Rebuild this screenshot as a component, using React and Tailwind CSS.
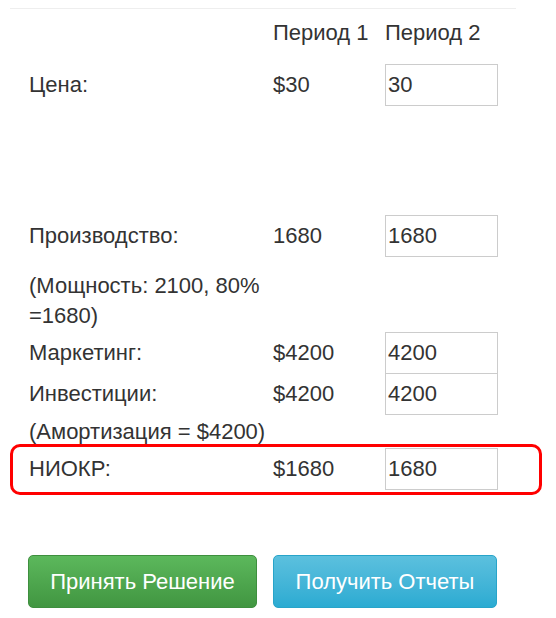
import React from "react";

const font = { fontFamily: '"Liberation Sans", Arial, sans-serif' };

function Field({ value, className = "" }) {
  return (
    <input
      defaultValue={value}
      className={`w-[113px] h-[42px] border border-[#ccc] bg-white pl-[2px] text-[22px] text-[#333] outline-none ${className}`}
      style={font}
    />
  );
}

function Row({ label, first, value, className = "" }) {
  return (
    <div className={`flex items-center h-[42px] ${className}`}>
      <div className="w-[244px]">{label}</div>
      <div className="w-[112px]">{first}</div>
      <Field value={value} />
    </div>
  );
}

export default function App() {
  return (
    <div className="w-[556px] h-[618px] bg-white text-[#333] text-[22px] leading-[30px] pt-[8px] overflow-hidden" style={font}>
      <div className="ml-[10px] w-[506px] border-t border-[#eee]" />

      <div className="pl-[29px]">
        <div className="flex items-center h-[28px] mt-[10px]">
          <div className="w-[244px]" />
          <div className="w-[112px]">Период 1</div>
          <div>Период 2</div>
        </div>

        <Row label="Цена:" first="$30" value="30" className="mt-[17px]" />
        <Row label="Производство:" first="1680" value="1680" className="mt-[109px]" />

        <div className="mt-[14px] w-[250px]">(Мощность: 2100, 80% =1680)</div>

        <Row label="Маркетинг:" first="$4200" value="4200" className="mt-[1px]" />
        <Row label="Инвестиции:" first="$4200" value="4200" className="-mt-px" />

        <div className="mt-[2px] h-[30px]">(Амортизация = $4200)</div>
      </div>

      <div className="ml-[10px] w-[532px] h-[51px] -mt-[3px] border-[3px] border-[#f00] rounded-[10px] pl-[16px] pt-[1px]">
        <Row label="НИОКР:" first="$1680" value="1680" />
      </div>

      <div className="flex gap-[16px] ml-[28px] mt-[60px]">
        <button className="w-[229px] h-[53px] rounded-[5px] border border-[#3e8f3e] bg-gradient-to-b from-[#5cb85c] to-[#419641] text-white text-[22px]" style={font}>
          Принять Решение
        </button>
        <button className="w-[224px] h-[53px] rounded-[5px] border border-[#28a4c9] bg-gradient-to-b from-[#5bc0de] to-[#2aabd2] text-white text-[22px]" style={font}>
          Получить Отчеты
        </button>
      </div>
    </div>
  );
}
